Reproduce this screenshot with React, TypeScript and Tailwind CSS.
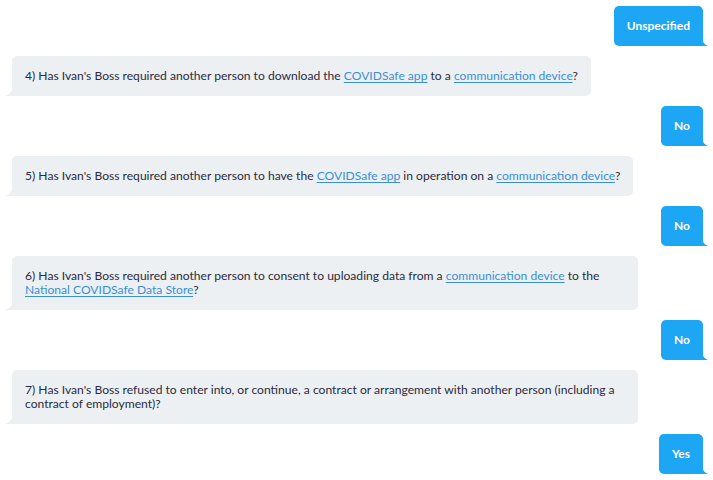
import React from "react";

function Link({ children }: { children: React.ReactNode }) {
  return <a href="#" className="text-[#3a8fd6] underline underline-offset-[2px] decoration-[1px]">{children}</a>;
}

function Question({ children }: { children: React.ReactNode }) {
  return (
    <div className="flex justify-start">
      <div className="relative max-w-[626px] rounded-[5px] rounded-bl-none bg-[#edf0f3] px-[13px] py-[13px] text-[12.1px] leading-[14px] text-[#2a2b3d]">
        <svg className="absolute bottom-0 left-[-7px]" width="8" height="10" viewBox="0 0 8 10">
          <path d="M8 0 V10 H0 C4 9 7 6 8 0 Z" fill="#edf0f3" />
        </svg>
        {children}
      </div>
    </div>
  );
}

function Answer({ children }: { children: React.ReactNode }) {
  return (
    <div className="flex justify-end">
      <div className="relative rounded-[5px] rounded-br-none bg-[#1ca6f4] px-[13px] py-[13px] text-[12px] font-bold leading-[14px] text-white">
        <svg className="absolute bottom-0 right-[-5px]" width="6" height="8" viewBox="0 0 6 8">
          <path d="M0 0 V8 H6 C3 7 1 5 0 0 Z" fill="#1ca6f4" />
        </svg>
        {children}
      </div>
    </div>
  );
}

export default function App() {
  return (
    <div
      className="flex min-h-[480px] w-full flex-col gap-[10px] bg-white pb-4 pl-[12px] pr-[10px] pt-[6px]"
      style={{ fontFamily: "Lato, 'Noto Sans', sans-serif" }}
    >
      <Answer>Unspecified</Answer>
      <Question>
        4) Has Ivan's Boss required another person to download the <Link>COVIDSafe app</Link> to a{" "}
        <Link>communication device</Link>?
      </Question>
      <Answer>No</Answer>
      <Question>
        5) Has Ivan's Boss required another person to have the <Link>COVIDSafe app</Link> in operation on a{" "}
        <Link>communication device</Link>?
      </Question>
      <Answer>No</Answer>
      <Question>
        6) Has Ivan's Boss required another person to consent to uploading data from a{" "}
        <Link>communication device</Link> to the <Link>National COVIDSafe Data Store</Link>?
      </Question>
      <Answer>No</Answer>
      <Question>
        7) Has Ivan's Boss refused to enter into, or continue, a contract or arrangement with another person (including a
        contract of employment)?
      </Question>
      <Answer>Yes</Answer>
    </div>
  );
}
